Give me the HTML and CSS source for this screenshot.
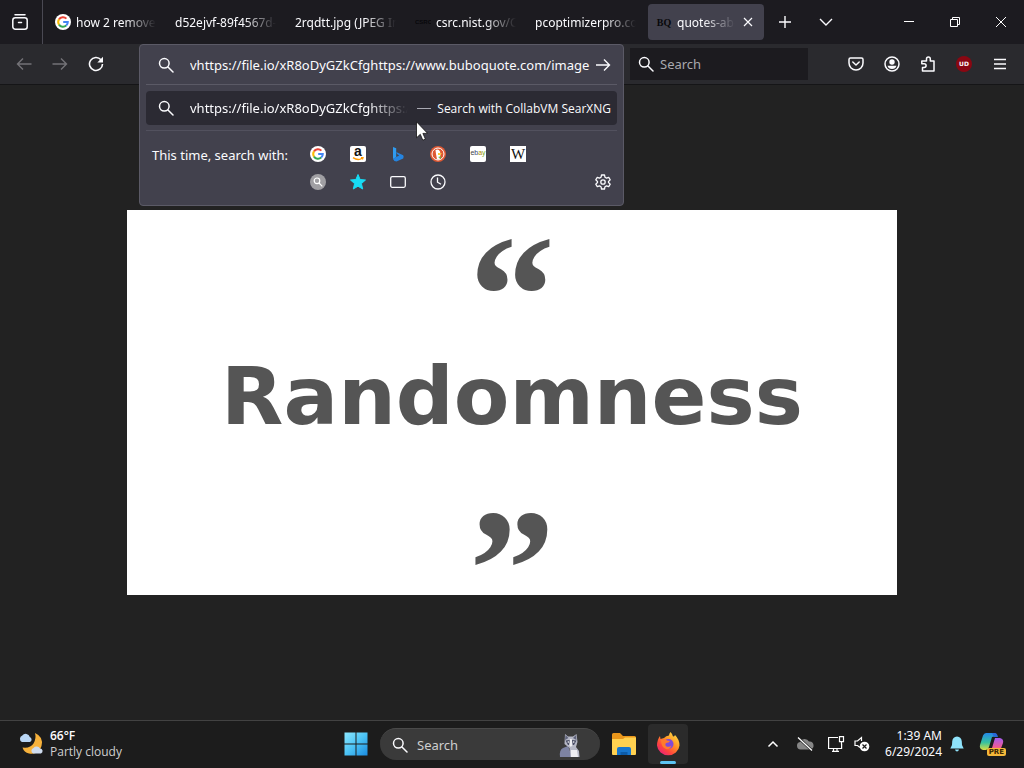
FILE: index.html
```html
<!DOCTYPE html>
<html lang="en">
<head>
<meta charset="utf-8">
<title>quotes-about-randomness</title>
<link rel="stylesheet" href="styles.css">
</head>
<body>
<svg class="defs" aria-hidden="true">
  <defs>
    <symbol id="google" viewBox="0 0 16 16"><circle cx="8" cy="8" r="8" fill="#fff"/><g fill="none" stroke-width="2"><path d="M4 5.4A4.8 4.8 0 0 1 11.4 4.6" stroke="#ea4335"/><path d="M4 5.4a4.8 4.8 0 0 0 0 5.2" stroke="#fbbc05"/><path d="M4 10.6a4.8 4.8 0 0 0 7.2 1" stroke="#34a853"/><path d="M11.2 11.6A4.8 4.8 0 0 0 12.8 8H8.2" stroke="#4285f4"/></g></symbol>
    <symbol id="lens" viewBox="0 0 16 16"><g fill="none" stroke="currentColor" stroke-width="1.5" stroke-linecap="round"><circle cx="6.3" cy="6.3" r="4.8"/><path d="M10 10l5 5"/></g></symbol>
  </defs>
</svg>

<header class="tabbar">
  <button class="view-btn" aria-label="Firefox View"><svg width="18" height="18" viewBox="0 0 18 18" fill="none" stroke="#fbfbfe" stroke-width="1.5" stroke-linecap="round"><path d="M4 1.8h10"/><rect x="1.8" y="4.8" width="14.4" height="11.4" rx="2.5"/><path d="M7.5 9.5h3"/></svg></button>
  <nav class="tabs" aria-label="Tabs">
    <a class="tab" href="#"><svg width="16" height="16"><use href="#google"/></svg><span class="tab-title">how 2 remove</span></a>
    <a class="tab" href="#"><span class="tab-title">d52ejvf-89f4567d-f</span></a>
    <a class="tab" href="#"><span class="tab-title">2rqdtt.jpg (JPEG Im</span></a>
    <a class="tab" href="#"><span class="favicon nist">CSRC</span><span class="tab-title">csrc.nist.gov/C</span></a>
    <a class="tab" href="#"><span class="tab-title">pcoptimizerpro.co</span></a>
    <div class="tab active"><span class="favicon bq">BQ</span><a class="tab-title" href="#">quotes-abou</a><button class="tab-close" aria-label="Close tab"><svg width="10" height="10" viewBox="0 0 10 10" stroke="#fbfbfe" stroke-width="1.2"><path d="M1 1l8 8M9 1L1 9"/></svg></button></div>
  </nav>
  <button class="tool-btn" aria-label="New tab"><svg width="14" height="14" viewBox="0 0 14 14" stroke="#fbfbfe" stroke-width="1.4"><path d="M7 1v12M1 7h12"/></svg></button>
  <button class="tool-btn" aria-label="List all tabs"><svg width="14" height="14" viewBox="0 0 14 14" fill="none" stroke="#fbfbfe" stroke-width="1.4"><path d="M1 4l6 6 6-6"/></svg></button>
  <div class="window-btns">
    <button aria-label="Minimize"><svg width="12" height="12" viewBox="0 0 12 12" stroke="#fff"><path d="M1 5.5h10"/></svg></button>
    <button aria-label="Restore"><svg width="12" height="12" viewBox="0 0 12 12" fill="none" stroke="#fff"><path d="M1.5 3.5h7v7h-7zM3.5 3.5v-2h7v7h-2"/></svg></button>
    <button aria-label="Close"><svg width="12" height="12" viewBox="0 0 12 12" stroke="#fff"><path d="M1 1l10 10M11 1L1 11"/></svg></button>
  </div>
</header>

<div class="navbar">
  <button class="nav-btn dim" aria-label="Back"><svg width="16" height="16" viewBox="0 0 16 16" fill="none" stroke="currentColor" stroke-width="1.4"><path d="M15.5 8H1.5M7 2.5L1.5 8 7 13.5"/></svg></button>
  <button class="nav-btn dim" aria-label="Forward"><svg width="16" height="16" viewBox="0 0 16 16" fill="none" stroke="currentColor" stroke-width="1.4"><path d="M.5 8h14M9 2.5L14.5 8 9 13.5"/></svg></button>
  <button class="nav-btn" aria-label="Reload"><svg width="16" height="16" viewBox="0 0 16 16" fill="none" stroke="currentColor" stroke-width="1.6"><path d="M13 3.8A6.5 6.5 0 1 0 14.5 8"/><path d="M15 .8v5.7H9.3z" fill="currentColor" stroke="none"/></svg></button>

  <div class="urlbar">
    <div class="url-panel">
      <div class="url-row">
        <svg width="16" height="16"><use href="#lens"/></svg>
        <input class="url-input" type="text" aria-label="Address" value="vhttps://file.io/xR8oDyGZkCfghttps://www.buboquote.com/image">
        <button class="go-btn" aria-label="Go"><svg width="16" height="16" viewBox="0 0 16 16" fill="none" stroke="#fbfbfe" stroke-width="1.4"><path d="M1 8h13.5M9 2.5L14.5 8 9 13.5"/></svg></button>
      </div>
      <a class="result" href="#">
        <svg width="16" height="16"><use href="#lens"/></svg>
        <span class="result-url">vhttps://file.io/xR8oDyGZkCfghttps://</span>
        <span class="dash"></span>
        <span class="result-action">Search with CollabVM SearXNG</span>
      </a>
      <div class="oneoffs">
        <span class="oneoff-label">This time, search with:</span>
        <div class="engines">
          <button aria-label="Google"><svg width="16" height="16"><use href="#google"/></svg></button>
          <button aria-label="Amazon"><span class="logo amazon">a<svg width="12" height="4" viewBox="0 0 12 4" fill="none" stroke="#f90" stroke-width="1.3"><path d="M1 .6q5 3.5 9 .6M9 .6l2-.1-.6 2"/></svg></span></button>
          <button aria-label="Bing"><svg width="16" height="16" viewBox="0 0 16 16"><path d="M3 1l3.200 1.200v9L3 13z" fill="#2f9bf0"/><path d="M3 13l3.200-2 3-1.500L7 8 6.200 6l7 3.200q.9 1.300 0 3.200L6.500 15.500Q4 15.500 3 13z" fill="#2584e0"/></svg></button>
          <button aria-label="DuckDuckGo"><svg width="16" height="16" viewBox="0 0 16 16"><circle cx="8" cy="8" r="8" fill="#de5833"/><circle cx="8" cy="8" r="6" fill="none" stroke="#fff"/><path d="M5.500 4q3-1.500 4.500 1.500l.5 3-1 5H7L6 8z" fill="#fff"/><path d="M8 7l4 .3-2 1.700H8z" fill="#fc3"/><path d="M8 11l3-.8v2.500z" fill="#65bc46"/></svg></button>
          <button aria-label="eBay"><span class="logo ebay"><b class="e1">e</b><b class="e2">b</b><b class="e3">a</b><b class="e4">y</b></span></button>
          <button aria-label="Wikipedia"><span class="logo wiki">W</span></button>
          <button aria-label="SearXNG"><svg width="16" height="16" viewBox="0 0 16 16"><circle cx="8" cy="8" r="8" fill="#a09fa3"/><g fill="none" stroke="#fff" stroke-width="1.2"><circle cx="7" cy="6.8" r="2.8"/><path d="M9 9l3.300 3.300"/></g></svg></button>
          <button aria-label="Bookmarks"><svg width="16" height="16" viewBox="0 0 16 16"><path d="M8 .5l2.100 5 5.400.5-4.100 3.600 1.300 5.400L8 12.200 3.300 15l1.300-5.400L.5 6l5.400-.5z" fill="#17dcf5" stroke="#17dcf5" stroke-linejoin="round"/></svg></button>
          <button aria-label="Tabs"><svg width="16" height="16" viewBox="0 0 16 16"><rect x=".7" y="2.7" width="14.6" height="10.6" rx="1.5" fill="none" stroke="#fbfbfe" stroke-width="1.3"/></svg></button>
          <button aria-label="History"><svg width="16" height="16" viewBox="0 0 16 16" fill="none" stroke="#fbfbfe" stroke-width="1.3"><circle cx="8" cy="8" r="7"/><path d="M7.500 3.500v4.700l3.500 2"/></svg></button>
        </div>
        <button class="gear" aria-label="Search settings"><svg width="16" height="16" viewBox="0 0 16 16" fill="none" stroke="#fbfbfe" stroke-width="1.3" stroke-linejoin="round"><path d="M6.500 1h3l.5 2.300 1.500.8 2.200-.8 1.500 2.600L13.500 7.500v1l1.700 1.600-1.500 2.600-2.200-.8-1.500.8L9.500 15h-3L6 12.700l-1.500-.8-2.200.8-1.500-2.600L2.500 8.500v-1L.8 5.900l1.500-2.600 2.200.8L6 3.300z"/><circle cx="8" cy="8" r="2.2"/></svg></button>
      </div>
      <svg class="cursor" width="12" height="20" viewBox="0 0 12 20"><path d="M.5.8v16l3.800-3.500 2.500 5.900 2.600-1.100-2.500-5.700h4.700z" fill="#fff" stroke="#111" stroke-width=".8"/></svg>
    </div>
  </div>

  <label class="searchbox"><svg width="16" height="16"><use href="#lens"/></svg><input type="text" placeholder="Search" aria-label="Search"></label>

  <div class="nav-tools">
    <button class="nav-btn" aria-label="Save to Pocket"><svg width="16" height="16" viewBox="0 0 16 16" fill="none" stroke="currentColor" stroke-width="1.5" stroke-linecap="round" stroke-linejoin="round"><path d="M2.500 2h11q1.500 0 1.500 1.500V7A7 7 0 0 1 1 7V3.500Q1 2 2.500 2z"/><path d="M4.800 6L8 9l3.200-3"/></svg></button>
    <button class="nav-btn" aria-label="Account"><svg width="16" height="16" viewBox="0 0 16 16"><circle cx="8" cy="8" r="7" fill="none" stroke="currentColor" stroke-width="1.5"/><circle cx="8" cy="6" r="2.7" fill="currentColor"/><path d="M3.500 9.800h9Q11.500 13 8 13T3.500 9.800z" fill="currentColor"/></svg></button>
    <button class="nav-btn" aria-label="Extensions"><svg width="16" height="16" viewBox="0 0 16 16" fill="none" stroke="currentColor" stroke-width="1.5" stroke-linejoin="round"><path d="M6.500 5V3a1.900 1.900 0 0 1 3.800 0v2H14v10H2.500v-3.500H4.200a1.900 1.900 0 0 0 0-3.800H1.800V5z"/></svg></button>
    <button class="nav-btn" aria-label="uBlock Origin"><span class="ublock">UD</span></button>
    <button class="nav-btn" aria-label="Menu"><svg width="14" height="14" viewBox="0 0 14 14" stroke="currentColor" stroke-width="1.4"><path d="M1 2.500h12M1 7h12M1 11.500h12"/></svg></button>
  </div>
</div>

<main class="viewer">
  <figure class="quote">
    <span class="mark">“</span>
    <h1>Randomness</h1>
    <span class="mark">”</span>
  </figure>
</main>

<footer class="taskbar">
  <button class="weather">
    <svg width="26" height="24" viewBox="0 0 26 24"><path d="M17 1q9 4 6.500 13T11 21.500q-5-1-6.500-6 8 1 11-4T17 1z" fill="#f7b23c"/><path d="M4 10a3.500 3.500 0 0 1 .3-6.500 4.300 4.300 0 0 1 7.500 1.500A2.700 2.700 0 0 1 12 10z" fill="#b9d6f5"/><path d="M15 21.500a3 3 0 0 1 .5-5.500 4 4 0 0 1 6.500.5 2.600 2.600 0 0 1 1 5z" fill="#cfdcee"/></svg>
    <span class="weather-text"><b>66°F</b><span>Partly cloudy</span></span>
  </button>
  <div class="apps">
    <button class="app" aria-label="Start"><svg width="24" height="24" viewBox="0 0 24 24"><defs><linearGradient id="win" x1="0" y1="0" x2="1" y2="1"><stop offset="0" stop-color="#8ce8ff"/><stop offset=".5" stop-color="#4cc3f5"/><stop offset="1" stop-color="#1a8be0"/></linearGradient></defs><path d="M.5.5h11v11H.5zM12.500.5h11v11h-11zM.5 12.500h11v11H.5zM12.500 12.500h11v11h-11z" fill="url(#win)"/></svg></button>
    <label class="task-search"><svg width="16" height="16"><use href="#lens"/></svg><input type="text" placeholder="Search" aria-label="Search Windows">
      <svg width="24" height="26" viewBox="0 0 24 26"><path d="M2 25q-1-7 3-9l5-2 4 11z" fill="#7d83a3"/><path d="M7 2l3 2.500h5L18.500 2l1 8-1.500 5 3 4 .5 6h-9l-1-9-5-4z" fill="#b6b8c6"/><path d="M7.500 3l3 3L7 8zM18 3l-3 3 3.500 2z" fill="#5e627a"/><path d="M7.500 8.500l4-.5 1.300 2L14 8l4.500.5-2.500 4.500h-6z" fill="#4a4e66"/><path d="M12 7h1.800l.8 6-1.700 2-1.700-2zM13 18h6l1 7h-7z" fill="#eeeef2"/><circle cx="10.300" cy="10" r=".8" fill="#fff"/><circle cx="15.700" cy="10" r=".8" fill="#fff"/></svg>
    </label>
    <button class="app" aria-label="File Explorer"><svg width="26" height="24" viewBox="0 0 26 24"><path d="M1 2.500Q1 1 2.500 1H9l3 3h11.500Q25 4 25 5.500V12H1z" fill="#e9961b"/><path d="M1 7h11l2-1.500h11V22q0 1-1 1H2q-1 0-1-1z" fill="#ffd150"/><path d="M6 23v-6q0-2 2-2h10q2 0 2 2v6z" fill="#1776cd"/><path d="M9.500 23v-3h7v3z" fill="#0c5ba8"/></svg></button>
    <button class="app running" aria-label="Firefox"><svg width="24" height="26" viewBox="0 0 24 26"><defs><linearGradient id="fx" x1="1" y1="0" x2=".2" y2="1"><stop offset="0" stop-color="#fff04d"/><stop offset=".45" stop-color="#ff9526"/><stop offset=".75" stop-color="#ff443e"/><stop offset="1" stop-color="#e6207f"/></linearGradient></defs><path d="M14.500 1q2 2 2.500 4.500 1.500 0 2-1.500 4.500 4.500 4.500 10.500A11.300 10.800 0 0 1 1 14.500Q1 9 4 5l.5 3L8 7q2-2.500 5-2.500Q13 2.500 14.500 1z" fill="url(#fx)"/><circle cx="12.500" cy="13" r="5" fill="#8049d8"/><path d="M5 9q3-2 6 .5l3 .5q-1 2-4 2-1.500 2 .5 3.500 3 1 5-1-1.500 4.500-5.500 3.500Q5 16 5 9z" fill="#ff7a2c"/></svg></button>
  </div>
  <div class="tray">
    <button aria-label="Show hidden icons"><svg width="12" height="12" viewBox="0 0 12 12" fill="none" stroke="#fff" stroke-width="1.5"><path d="M1.500 8.500L6 4l4.500 4.500"/></svg></button>
    <button aria-label="OneDrive"><svg width="18" height="16" viewBox="0 0 18 16"><path d="M4.500 13.500A3.800 3.800 0 0 1 4 6a5 5 0 0 1 9-.5 4 4 0 0 1 1 8z" fill="#868686"/><path d="M2 1.500l14 13" stroke="#1c1c1c" stroke-width="2.4"/><path d="M2 1.500l14 13" stroke="#fff" stroke-width="1.3"/></svg></button>
    <button class="net" aria-label="Network"><svg width="18" height="18" viewBox="0 0 18 18" fill="none" stroke="#fff" stroke-width="1.2"><path d="M11 2.500H1.600v11h13V9M5 16.400h7M6.500 13.500v3M10 13.500v3"/><path d="M12.500 1.600h4v5h-4zM14.500 6.600v3"/></svg></button>
    <button class="vol" aria-label="Volume muted"><svg width="18" height="18" viewBox="0 0 18 18"><path d="M7 12.500L4.500 10.500H2V6h2.500L8.500 2.500V6" fill="none" stroke="#fff" stroke-width="1.200"/><circle cx="11.500" cy="11.500" r="4.800" fill="#fff"/><path d="M9.500 9.500l4 4M13.500 9.500l-4 4" stroke="#1c1c1c" stroke-width="1.200"/></svg></button>
    <button class="clock"><span>1:39 AM</span><span>6/29/2024</span></button>
    <button class="bell" aria-label="Notifications"><svg width="14" height="16" viewBox="0 0 14 16"><path d="M7 .5q4.500.5 4.800 5L12 9l1.700 3.500H.3L2 9l.2-3.500Q2.500 1 7 .5zM5 13.500h4q-.5 2-2 2t-2-2z" fill="#8fe3fb"/></svg></button>
    <button class="copilot" aria-label="Copilot preview"><svg width="26" height="26" viewBox="0 0 26 26"><defs><linearGradient id="cpa" x1="0" y1="0" x2="0" y2="1"><stop offset="0" stop-color="#2388e8"/><stop offset=".55" stop-color="#35c1a0"/><stop offset="1" stop-color="#d8dd42"/></linearGradient><linearGradient id="cpb" x1="0" y1="0" x2="0" y2="1"><stop offset="0" stop-color="#a45cf0"/><stop offset=".6" stop-color="#ee5a94"/><stop offset="1" stop-color="#ff9b50"/></linearGradient></defs><path d="M7 2h8q2 0 3 3l-5 1-3 10q-1 3-3 3H4q-4-1-3-5L4 4.500Q5 2 7 2z" fill="url(#cpa)"/><path d="M13 2h3q2 0 3 4h-4z" fill="#2868d8"/><path d="M16 7h5q4 1 3 5l-3 8q-1 2-3 2H9q3-1 4-5z" fill="url(#cpb)"/></svg><span>PRE</span></button>
  </div>
</footer>
</body>
</html>
```

FILE: styles.css
```css
* { box-sizing: border-box; }

body {
  margin: 0;
  min-height: 100vh;
  display: flex;
  flex-direction: column;
  background: #222222;
  color: #fbfbfe;
  font-family: "Noto Sans", "Open Sans", sans-serif;
  font-size: 12px;
}

button, input { font: inherit; color: inherit; }

button {
  display: flex;
  align-items: center;
  justify-content: center;
  padding: 0;
  border: 0;
  background: none;
}

input { border: 0; padding: 0; background: none; outline: 0; min-width: 0; }
a { color: inherit; text-decoration: none; }
svg { display: block; flex: none; }
.defs { position: absolute; width: 0; height: 0; }

/* Tab strip */
.tabbar { display: flex; height: 44px; background: #1c1b20; }
.view-btn { width: 43px; padding-right: 3px; border-right: 1px solid #4a4953; }
.tabs { display: flex; gap: 4px; padding: 4px 0 4px 5px; }

.tab {
  display: flex;
  align-items: center;
  gap: 5px;
  width: 116px;
  padding: 0 8px 0 7px;
  border-radius: 4px;
}

.tab.active { padding-left: 8px; background: #42414d; }

.tab-title {
  flex: 1;
  overflow: hidden;
  white-space: nowrap;
  mask-image: linear-gradient(to left, transparent, #000 32px);
}

.tab-close { width: 16px; height: 20px; }
.favicon { width: 16px; overflow: hidden; text-align: center; color: #08080b; }
.nist { font: bold 6px "Liberation Sans", sans-serif; }
.bq { font: bold 10px "Liberation Serif", serif; }
.tool-btn { width: 41px; }
.window-btns { display: flex; margin-left: auto; }
.window-btns button { width: 46px; }

/* Navigation toolbar */
.navbar {
  display: flex;
  align-items: center;
  height: 41px;
  padding: 0 6px;
  background: #2a2a2e;
  border-bottom: 1px solid #151517;
}

.nav-btn { width: 36px; height: 36px; }
.dim { color: #737277; }
.nav-tools { display: flex; margin-left: 30px; }

.ublock {
  width: 16px;
  height: 16px;
  border-radius: 8px;
  background: #8a0712;
  font: bold 6px/16px "DejaVu Sans", sans-serif;
}

.searchbox {
  display: flex;
  align-items: center;
  gap: 6px;
  width: 178px;
  height: 32px;
  margin-left: 6px;
  padding: 0 8px;
  background: #1c1b1f;
  font-size: 13px;
}

.searchbox input { flex: 1; }
.searchbox input::placeholder { color: #a9a9ae; opacity: 1; }

/* Address bar and its suggestions */
.urlbar { position: relative; flex: 1; align-self: stretch; margin-left: 25px; }

.url-panel {
  position: absolute;
  top: 0;
  left: 0;
  right: 0;
  z-index: 1;
  padding: 0 6px 9px;
  background: #42414d;
  border: 1px solid #5b5a66;
  border-radius: 4px;
  font-size: 13px;
}

.url-row {
  display: flex;
  align-items: center;
  height: 40px;
  padding: 0 4px 0 12px;
  border-bottom: 1px solid #5b5a66;
}

.url-input { flex: 1; margin-left: 16px; }
.go-btn { width: 20px; height: 30px; }

.result {
  display: flex;
  align-items: center;
  height: 34px;
  margin: 6px 0 5px;
  padding: 0 6px 0 12px;
  border-radius: 4px;
  background: #2b2a33;
}

.result-url {
  flex: 1;
  margin-left: 16px;
  overflow: hidden;
  white-space: nowrap;
  mask-image: linear-gradient(to left, transparent, #000 40px);
}

.dash { width: 14px; height: 1px; margin: 0 6px 0 9px; background: #a9a9b3; }
.result-action { font-family: "Open Sans", sans-serif; font-size: 12px; white-space: nowrap; }

.oneoffs {
  display: flex;
  padding: 9px 0 0 6px;
  border-top: 1px solid #52515e;
}

.oneoff-label { width: 146px; line-height: 30px; white-space: nowrap; }
.engines { display: grid; grid-template-columns: repeat(6, 40px); }
.engines button { height: 28px; }

.gear { width: 28px; height: 28px; margin-left: auto; align-self: flex-end; }

.logo { position: relative; width: 16px; height: 16px; border-radius: 2px; background: #fff; color: #111; }
.amazon { font: bold 14px/11px "Liberation Sans", sans-serif; }
.amazon svg { position: absolute; left: 2px; bottom: 1px; }
.ebay { font: 7px/14px "Liberation Sans", sans-serif; }
.ebay b { font-weight: normal; }
.e1 { color: #444; }
.e2 { color: #347; }
.e3 { color: #a80; }
.e4 { color: #7a2; }
.wiki { border-radius: 0; font: 15px/16px "Liberation Serif", serif; }
.cursor { position: absolute; left: 276px; top: 76px; }

/* Image viewer */
.viewer {
  flex: 1;
  display: flex;
  align-items: center;
  justify-content: center;
}

.quote {
  display: flex;
  flex-direction: column;
  align-items: center;
  width: 75.2%;
  margin: 0;
  padding-top: 64px;
  aspect-ratio: 2;
  background: #fff;
  color: #555;
}

.quote h1 { margin: 34px 0 106px; font: bold 81px/92px "DejaVu Sans", sans-serif; }
.mark { font: bold 172px/42px "Liberation Serif", serif; }

/* Taskbar */
.taskbar {
  display: grid;
  grid-template-columns: 1fr auto 1fr;
  height: 48px;
  padding-bottom: 1px;
  background: #1c1c1c;
  border-top: 1px solid #424242;
}

.weather { justify-self: start; gap: 6px; padding-left: 18px; font-family: "Open Sans", sans-serif; }
.weather-text { display: flex; flex-direction: column; line-height: 16px; text-align: left; }
.weather-text b { font-weight: 600; }
.weather-text span { color: #cfcfcf; }
.apps { display: flex; align-items: center; gap: 4px; }
.app { width: 40px; height: 40px; border-radius: 4px; }

.running { position: relative; background: #2b2b2b; }
.running::after {
  content: "";
  position: absolute;
  left: 12px;
  bottom: 0;
  width: 16px;
  height: 3px;
  border-radius: 2px;
  background: #5cc3f2;
}

.task-search {
  display: flex;
  align-items: center;
  gap: 9px;
  width: 220px;
  height: 32px;
  padding: 0 18px 0 12px;
  border-radius: 16px;
  background: #3a3a3a;
  border-top: 1px solid #4a4a4a;
  font-size: 13px;
}

.task-search input { flex: 1; }
.task-search input::placeholder { color: #cfcfcf; opacity: 1; }

.tray { display: flex; justify-content: flex-end; padding-right: 12px; }
.tray button { width: 32px; }
.tray .net { width: 30px; }
.tray .vol { width: 22px; }
.tray .clock { width: 69px; flex-direction: column; align-items: flex-end; line-height: 16px; }
.tray .bell { width: 30px; }
.tray .copilot { position: relative; width: 40px; }

.copilot span {
  position: absolute;
  right: 6px;
  bottom: 11px;
  padding: 0 2px;
  border-radius: 2px;
  background: #f5b83a;
  color: #3a2500;
  font: bold 7px/8px "DejaVu Sans", sans-serif;
}
```
